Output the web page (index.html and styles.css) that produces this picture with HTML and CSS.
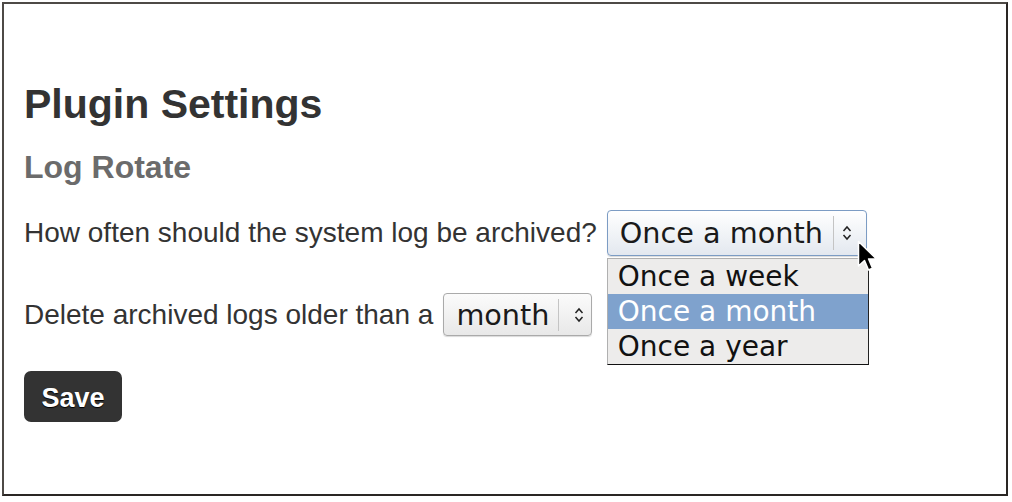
FILE: index.html
```html
<!DOCTYPE html>
<html lang="en">
<head>
  <meta charset="UTF-8">
  <title>Plugin Settings</title>
  <link rel="stylesheet" href="styles.css">
</head>
<body>

  <div class="frame">

    <h1>Plugin Settings</h1>
    <h2>Log Rotate</h2>

    <div class="row">
      <label>How often should the system log be archived?</label>
      <div class="combo open">
        <span class="combo-value">Once a month</span>
        <span class="combo-sep"></span>
        <svg class="combo-arrow" width="10" height="18" viewBox="0 0 10 18">
          <path d="M1.5 7 L5 3 L8.5 7 M1.5 11 L5 15 L8.5 11" fill="none" stroke="#222" stroke-width="1.5"/>
        </svg>
        <ul class="combo-list">
          <li>Once a week</li>
          <li class="selected">Once a month</li>
          <li>Once a year</li>
        </ul>
        <svg class="cursor" width="24" height="34" viewBox="0 0 24 34">
          <path d="M1.5 1.5 L1.5 26 L7.5 20.5 L11.5 30 L15.5 28.3 L11.6 19 L19.5 19 Z" fill="#000" stroke="#fff" stroke-width="1.5" stroke-linejoin="round"/>
        </svg>
      </div>
    </div>

    <div class="row second">
      <label>Delete archived logs older than a</label>
      <div class="combo small">
        <span class="combo-value">month</span>
        <span class="combo-sep"></span>
        <svg class="combo-arrow" width="10" height="18" viewBox="0 0 10 18">
          <path d="M1.5 7 L5 3 L8.5 7 M1.5 11 L5 15 L8.5 11" fill="none" stroke="#222" stroke-width="1.5"/>
        </svg>
      </div>
    </div>

    <button class="btn">Save</button>

  </div>

</body>
</html>
```

FILE: styles.css
```css
body {
  margin: 0;
  background-color: #ffffff;
  font-family: "Liberation Sans", Arial, sans-serif;
  color: #333;
}
.frame {
  margin: 2px 0 0 2px;
  width: 1006px;
  height: 494px;
  border: 2px solid;
  border-color: #4e4a46 #2a2624 #2a2624 #4e4a46;
  padding: 0 0 0 20px;
  box-sizing: border-box;
}
h1 {
  margin: 76px 0 0 0;
  font-size: 41px;
  line-height: 48px;
  font-weight: bold;
  color: #333;
}
h2 {
  margin: 21px 0 0 0;
  font-size: 32px;
  line-height: 36px;
  font-weight: bold;
  color: #6b6b6b;
}
.row {
  display: flex;
  align-items: center;
  gap: 10px;
  margin-top: 25px;
  font-size: 28px;
  line-height: 32px;
}
.row.second {
  margin-top: 37px;
}
.combo {
  position: relative;
  display: flex;
  align-items: center;
  height: 46px;
  padding: 0 14px 0 12px;
  box-sizing: border-box;
  border: 1px solid #aaa;
  border-radius: 4px;
  background: linear-gradient(#fbfbfb, #e8e8e8);
  font-family: "DejaVu Sans", sans-serif;
  font-size: 28.7px;
  color: #1a1a1a;
  box-shadow: 0 1px 1px rgba(0,0,0,0.15);
}
.combo.open {
  border-color: #7c9cc4;
  background: linear-gradient(#ffffff, #e3e8ef);
}
.combo.small {
  height: 43px;
  padding-left: 12px;
  padding-right: 7px;
}
.combo-value {
  line-height: 32px;
}
.combo-sep {
  width: 1px;
  height: 34px;
  margin: 0 8px 0 10px;
  background-color: #c4c4c4;
}
.combo.small .combo-sep {
  height: 32px;
  margin: 0 15px 0 9px;
}
.combo-list {
  position: absolute;
  left: -1px;
  top: 47px;
  width: 262px;
  margin: 0;
  padding: 0;
  list-style: none;
  background-color: #edeceb;
  border: 1px solid #b0b0b0;
  border-bottom-color: #111;
  border-right-color: #222;
  box-sizing: border-box;
  font-size: 28px;
}
.combo-list li {
  height: 35px;
  line-height: 35px;
  padding-left: 10px;
  color: #111;
}
.combo-list li.selected {
  background-color: #7fa2cd;
  color: #fff;
}
.cursor {
  position: absolute;
  left: 249px;
  top: 29px;
}
.btn {
  display: block;
  margin-top: 35px;
  padding-top: 5px;
  width: 98px;
  height: 51px;
  border: none;
  border-radius: 7px;
  background-color: #333;
  color: #fff;
  font-family: "Liberation Sans", Arial, sans-serif;
  font-size: 27px;
  font-weight: bold;
  text-shadow: 0 1px 1px #000;
}
```
